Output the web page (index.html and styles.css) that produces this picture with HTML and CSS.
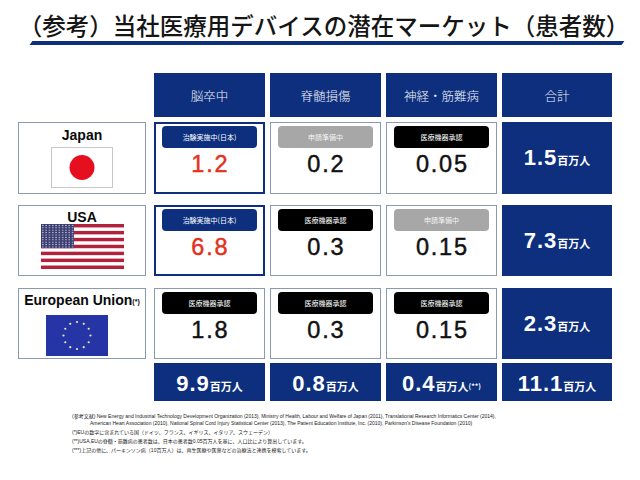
FILE: index.html
```html
<!DOCTYPE html>
<html lang="ja">
<head>
<meta charset="utf-8">
<title>潜在マーケット</title>
<link rel="stylesheet" href="styles.css">
</head>
<body>
<div class="page">
  <h1 class="title">（参考）当社医療用デバイスの潜在マーケット（患者数）</h1>
  <div class="title-bar"></div>

  <div class="table">
    <div class="row head">
      <div></div>
      <div class="hcell">脳卒中</div>
      <div class="hcell">脊髄損傷</div>
      <div class="hcell">神経・筋難病</div>
      <div class="hcell">合計</div>
    </div>

    <div class="row data r-jp">
      <div class="label lab-jp">
        <div class="name">Japan</div>
        <div class="flag-jp">
          <svg width="60" height="39" viewBox="0 0 60 39"><rect width="60" height="39" fill="#fff"/><circle cx="30" cy="19.5" r="12.5" fill="#e50f1f"/></svg>
        </div>
      </div>
      <div class="cell hl"><div class="badge b-navy">治験実施中(日本)</div><div class="num red">1.2</div></div>
      <div class="cell"><div class="badge b-gray">申請準備中</div><div class="num">0.2</div></div>
      <div class="cell"><div class="badge b-black">医療機器承認</div><div class="num">0.05</div></div>
      <div class="total"><span class="tv"><span class="v">1.5</span><span class="u">百万人</span></span></div>
    </div>

    <div class="row data r-us">
      <div class="label">
        <div class="name">USA</div>
        <div class="flag-us">
          <svg width="83" height="45" viewBox="0 0 83 45">
            <defs>
              <pattern id="stars" width="3.3" height="2.4" patternUnits="userSpaceOnUse" x="0.2" y="0.2">
                <circle cx="1.65" cy="1.2" r="0.6" fill="#fff"/>
              </pattern>
            </defs>
            <rect width="83" height="45" fill="#b3223c"/>
            <rect y="3.46" width="83" height="3.46" fill="#fff"/>
            <rect y="10.38" width="83" height="3.46" fill="#fff"/>
            <rect y="17.3" width="83" height="3.46" fill="#fff"/>
            <rect y="24.22" width="83" height="3.46" fill="#fff"/>
            <rect y="31.14" width="83" height="3.46" fill="#fff"/>
            <rect y="38.06" width="83" height="3.46" fill="#fff"/>
            <rect width="33" height="24.2" fill="#3a3d72"/>
            <rect width="33" height="24.2" fill="url(#stars)"/>
          </svg>
        </div>
      </div>
      <div class="cell hl"><div class="badge b-navy">治験実施中(日本)</div><div class="num red">6.8</div></div>
      <div class="cell"><div class="badge b-black">医療機器承認</div><div class="num">0.3</div></div>
      <div class="cell"><div class="badge b-gray">申請準備中</div><div class="num">0.15</div></div>
      <div class="total"><span class="tv"><span class="v">7.3</span><span class="u">百万人</span></span></div>
    </div>

    <div class="row data r-eu">
      <div class="label">
        <div class="name">European Union<span class="ast">(*)</span></div>
        <div class="flag-eu">
          <svg width="62" height="41" viewBox="0 0 62 41">
            <rect width="62" height="41" fill="#2535a6"/>
            <g fill="#f2eab4">
              <circle cx="31" cy="7" r="1.1"/>
              <circle cx="37.75" cy="8.81" r="1.1"/>
              <circle cx="42.69" cy="13.75" r="1.1"/>
              <circle cx="44.5" cy="20.5" r="1.1"/>
              <circle cx="42.69" cy="27.25" r="1.1"/>
              <circle cx="37.75" cy="32.19" r="1.1"/>
              <circle cx="31" cy="34" r="1.1"/>
              <circle cx="24.25" cy="32.19" r="1.1"/>
              <circle cx="19.31" cy="27.25" r="1.1"/>
              <circle cx="17.5" cy="20.5" r="1.1"/>
              <circle cx="19.31" cy="13.75" r="1.1"/>
              <circle cx="24.25" cy="8.81" r="1.1"/>
            </g>
          </svg>
        </div>
      </div>
      <div class="cell"><div class="badge b-black">医療機器承認</div><div class="num">1.8</div></div>
      <div class="cell"><div class="badge b-black">医療機器承認</div><div class="num">0.3</div></div>
      <div class="cell"><div class="badge b-black">医療機器承認</div><div class="num">0.15</div></div>
      <div class="total"><span class="tv"><span class="v">2.3</span><span class="u">百万人</span></span></div>
    </div>

    <div class="row sum">
      <div></div>
      <div class="total low"><span class="tv"><span class="v">9.9</span><span class="u">百万人</span></span></div>
      <div class="total low"><span class="tv"><span class="v">0.8</span><span class="u">百万人</span></span></div>
      <div class="total low"><span class="tv"><span class="v">0.4</span><span class="u">百万人</span><span class="ast2">(**)</span></span></div>
      <div class="total low"><span class="tv"><span class="v">11.1</span><span class="u">百万人</span></span></div>
    </div>
  </div>

  <div class="notes">
    <div class="ref">(参考文献) New Energy and Industrial Technology Development Organization (2013), Ministry of Health, Labour and Welfare of Japan (2011), Translational Research Informatics Center (2014),</div>
    <div class="ref ref2">American Heart Association (2010), National Spinal Cord Injury Statistical Center (2013), The Patient Education Institute, Inc. (2010), Parkinson's Disease Foundation (2010)</div>
    <div class="fn fn1">(*)EUの数字に含まれている国（ドイツ、フランス、イギリス、イタリア、スウェーデン）</div>
    <div class="fn">(**)USA,EUの脊髄・筋難病の患者数は、日本の患者数0.05百万人を基に、人口比により算出しています。</div>
    <div class="fn">(***)上記の他に、パーキンソン病（10百万人）は、再生医療や医薬などの治療法と連携を模索しています。</div>
  </div>
</div>
</body>
</html>
```

FILE: styles.css
```css
* { box-sizing: border-box; }

body {
  margin: 0;
  background: #ffffff;
  font-family: "Liberation Sans", "Noto Sans CJK JP", sans-serif;
  color: #111;
}

.page {
  width: 640px;
  height: 480px;
  overflow: hidden;
}

.title {
  margin: 10px 0 0;
  padding-left: 8px;
  height: 30px;
  font-family: "Noto Sans CJK JP", sans-serif;
  font-weight: 500;
  font-size: 23.5px;
  line-height: 30px;
  text-align: center;
  white-space: nowrap;
  color: #151515;
}

.title-bar {
  margin: 1px 17px 0 31px;
  height: 4px;
  background: #0d2f7e;
  transform: skewX(-35deg);
}

.table {
  margin: 28px 0 0 18px;
}

.row {
  display: grid;
  grid-template-columns: 131px 111px 111px 111px 110px;
  column-gap: 5px;
}

.head { height: 44px; }

.hcell {
  background: #0d2f7e;
  color: #eef1f7;
  display: flex;
  align-items: center;
  justify-content: center;
  font-family: "Noto Sans CJK JP", sans-serif;
  font-size: 12.5px;
  font-weight: 300;
}

.data { height: 71px; }
.r-jp { margin-top: 5px; height: 72px; }
.r-us { margin-top: 11px; }
.r-eu { margin-top: 12px; }

.label {
  width: 128px;
  border: 1px solid #8a9ab0;
  display: flex;
  flex-direction: column;
  align-items: center;
  padding-top: 3px;
  background: #fff;
}

.lab-jp { padding-top: 4px; }

.name {
  font-family: "Liberation Sans", sans-serif;
  font-weight: bold;
  font-size: 14px;
  line-height: 16px;
  color: #0a0a0a;
  white-space: nowrap;
}

.ast {
  font-size: 7px;
  font-weight: bold;
  vertical-align: 1px;
}

.flag-jp {
  margin-top: 4px;
  width: 62px;
  height: 41px;
  border: 1px solid #c9c9c9;
  display: flex;
}

.flag-us {
  margin-top: -1px;
  display: flex;
}

.flag-eu {
  margin-top: 5px;
  margin-right: 10px;
  display: flex;
}

.cell {
  border: 1px solid #8a9ab0;
  display: flex;
  flex-direction: column;
  align-items: center;
  padding-top: 3px;
  background: #fff;
}

.cell.hl {
  border: 2px solid #0d2f7e;
  padding-top: 2px;
}

.badge {
  width: 95px;
  height: 22px;
  border-radius: 4px;
  color: #ffffff;
  font-family: "Noto Sans CJK JP", sans-serif;
  font-size: 7px;
  line-height: 22px;
  text-align: center;
  white-space: nowrap;
}

.b-navy { background: #0d2f7e; }
.b-black { background: #000000; }
.b-gray { background: #a7a7a7; color: #f4f4f4; }

.num {
  margin-top: 3px;
  padding-left: 1.8px;
  font-family: "Liberation Sans", sans-serif;
  font-size: 23.5px;
  line-height: 26px;
  letter-spacing: 1.8px;
  color: #111;
  -webkit-text-stroke: 0.45px currentColor;
}

.num.red { color: #e4301c; }

.total {
  background: #0d2f7e;
  color: #ffffff;
  display: flex;
  align-items: center;
  justify-content: center;
}

.tv { white-space: nowrap; }

.v {
  font-family: "Liberation Sans", sans-serif;
  font-weight: bold;
  font-size: 22px;
  letter-spacing: 1px;
}

.u {
  font-family: "Noto Sans CJK JP", sans-serif;
  font-weight: bold;
  font-size: 11px;
}

.ast2 {
  font-family: "Noto Sans CJK JP", sans-serif;
  font-weight: bold;
  font-size: 7px;
  vertical-align: 2px;
}

.sum {
  margin-top: 4px;
  height: 38px;
}

.total.low { padding-top: 4px; }

.notes {
  margin: 12px 0 0 72px;
  font-family: "Liberation Sans", "Noto Sans CJK JP", sans-serif;
  font-size: 5px;
  color: #222;
  white-space: nowrap;
}

.ref { line-height: 7px; }
.ref2 { padding-left: 18px; }
.fn { line-height: 9px; }
.fn1 { margin-top: 1px; }
```
